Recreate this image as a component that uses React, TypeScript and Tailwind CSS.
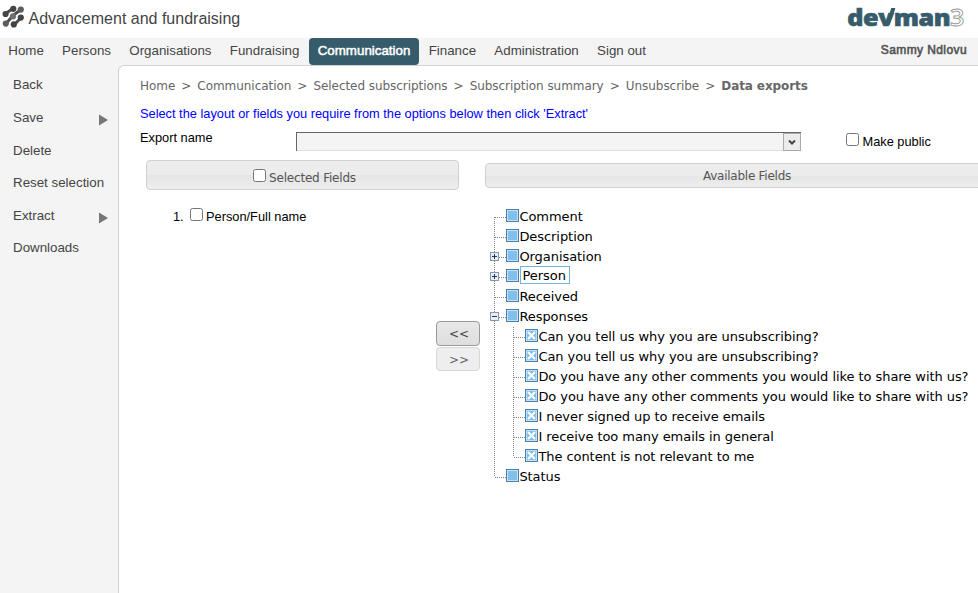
import type { ReactNode } from "react";

const navItems = ["Home", "Persons", "Organisations", "Fundraising", "Communication", "Finance", "Administration", "Sign out"];
const sideItems = [
  { label: "Back" },
  { label: "Save", arrow: true },
  { label: "Delete" },
  { label: "Reset selection" },
  { label: "Extract", arrow: true },
  { label: "Downloads" },
];
const crumbs = ["Home", "Communication", "Selected subscriptions", "Subscription summary", "Unsubscribe"];

type Node = { label: string; toggle?: "plus" | "minus"; selected?: boolean; child?: boolean; first?: boolean; last?: boolean };
const nodes: Node[] = [
  { label: "Comment", first: true },
  { label: "Description" },
  { label: "Organisation", toggle: "plus" },
  { label: "Person", toggle: "plus", selected: true },
  { label: "Received" },
  { label: "Responses", toggle: "minus" },
  { label: "Can you tell us why you are unsubscribing?", child: true },
  { label: "Can you tell us why you are unsubscribing?", child: true },
  { label: "Do you have any other comments you would like to share with us?", child: true },
  { label: "Do you have any other comments you would like to share with us?", child: true },
  { label: "I never signed up to receive emails", child: true },
  { label: "I receive too many emails in general", child: true },
  { label: "The content is not relevant to me", child: true, last: true },
  { label: "Status", last: true },
];

function Check({ className = "" }: { className?: string }) {
  return <input type="checkbox" className={`m-0 block size-[13px] shrink-0 appearance-none rounded-[2.5px] border border-[#767676] bg-white ${className}`} />;
}

function Connector({ node }: { node: Node }) {
  const width = node.child ? 35 : 16;
  const x = node.child ? 23.5 : 4.5;
  return (
    <svg width={width} height="20" className="block shrink-0" fill="none" shapeRendering="crispEdges">
      <g stroke="#808080" strokeDasharray="1 1">
        {node.child && <path d="M4.5 0V20" />}
        <path d={`M${x} ${node.first ? 10 : 0}V${node.last ? 10 : 20}`} />
        <path d={`M${x + 0.5} 10.5H${width}`} />
      </g>
      {node.toggle && (
        <g>
          <rect x="0.5" y="5.5" width="8" height="8" rx="1" fill="#e8edf4" stroke="#8496b2" />
          <path d={node.toggle === "plus" ? "M2 9.5H7M4.5 7V12" : "M2 9.5H7"} stroke="#24385c" />
        </g>
      )}
    </svg>
  );
}

function NodeBox({ crossed }: { crossed?: boolean }) {
  return (
    <svg width="13" height="13" className="mt-[2px] block shrink-0">
      <rect x="0.5" y="0.5" width="12" height="12" fill="#c3e2f6" stroke="#4a80b0" />
      <rect x="2" y="2" width="9" height="9" fill="#82c0ea" />
      {crossed && <path d="M3 3L10 10M10 3L3 10" stroke="#fff" strokeWidth="2" />}
    </svg>
  );
}

function TreeRow({ node }: { node: Node }) {
  return (
    <div className="flex h-5 items-start whitespace-nowrap">
      <Connector node={node} />
      <NodeBox crossed={node.child} />
      {node.selected ? (
        <span className="-mt-px ml-px h-[18px] w-[50px] border border-[#74b4dc] px-[1.5px] leading-[17px]">{node.label}</span>
      ) : (
        <span className="ml-[0.4px] leading-[19px]">{node.label}</span>
      )}
    </div>
  );
}

function Bar({ className, children }: { className: string; children: ReactNode }) {
  return (
    <div className={`flex shrink-0 items-center justify-center rounded-[4px] border border-[#d0d0d0] bg-[linear-gradient(#ededed_0%,#ececec_50%,#e5e5e5_52%,#eeeeee_100%)] font-['DejaVu_Sans',sans-serif] text-[12px] text-[#555] ${className}`}>
      {children}
    </div>
  );
}

function Mark() {
  return (
    <svg width="25" height="25" viewBox="0 0 25 25" className="block shrink-0" fill="#444" stroke="#4d4d4d">
      <path d="M4.7 9.5L12.3 4.3M4.7 20L12 11.5L20.3 5.3M13 21L20.7 13" strokeWidth="3" />
      <g stroke="none">
        <circle cx="12.3" cy="4.8" r="3.1" />
        <circle cx="19.8" cy="5.6" r="3.1" fill="#5c5c5c" />
        <circle cx="4.6" cy="10" r="3.1" />
        <circle cx="12" cy="12.3" r="3.1" fill="#707070" />
        <circle cx="19.8" cy="13.6" r="3.1" />
        <circle cx="4.8" cy="19.6" r="3.1" fill="#5c5c5c" />
        <circle cx="12.8" cy="20.4" r="3.1" />
      </g>
    </svg>
  );
}

export default function App() {
  return (
    <div className="flex h-[593px] w-[978px] flex-col overflow-hidden bg-white font-['Liberation_Sans',Arial,sans-serif] text-[13.33px] text-[#444]">
      <header className="flex h-[38px] shrink-0 items-start">
        <div className="pt-[4px] pl-px"><Mark /></div>
        <h1 className="mt-[9px] ml-[2.5px] text-[16px] leading-[20px] whitespace-nowrap">Advancement and fundraising</h1>
        <div className="mt-[2px] mr-[14px] ml-auto flex origin-right scale-x-[1.07] font-['Open_Sans',sans-serif] text-[23.5px] leading-[30px] font-extrabold tracking-[-0.4px] text-[#365c6b] [-webkit-text-stroke:0.7px_#365c6b]">
          <span>de</span>
          <span className="relative">
            v
            <svg width="10" height="18" className="absolute top-[6px] right-[-2px]"><path d="M1 17L6 0H10L4.5 17Z" fill="#365c6b" /></svg>
          </span>
          <span className="ml-[0.5px]">man</span>
          <span className="font-semibold text-white [-webkit-text-stroke:0.9px_#999]">3</span>
        </div>
      </header>

      <nav className="flex h-[27px] shrink-0 items-stretch bg-[#f4f4f4] pr-[11px] leading-[25px] whitespace-nowrap">
        <div className="-ml-[0.9px] flex">
          {navItems.map((item) => (
            <a key={item} className={item === "Communication" ? "rounded-[4px] bg-[#365c6b] px-[9.15px] text-white [-webkit-text-stroke:0.5px_white]" : "px-[9.15px]"}>{item}</a>
          ))}
        </div>
        <span className="ml-auto text-[12px] leading-[24px] tracking-[0.4px] text-[#555] [-webkit-text-stroke:0.6px_#555]">Sammy Ndlovu</span>
      </nav>

      <div className="flex min-h-0 flex-1 bg-[#f4f4f4]">
        <aside className="w-[118px] shrink-0 pt-[4.2px] pl-[13px]">
          {sideItems.map((item) => (
            <div key={item.label} className="flex h-[32.6px] items-center justify-between pr-[10px] whitespace-nowrap">
              <span>{item.label}</span>
              {item.arrow && <svg width="9" height="12" className="mt-[4px]"><path d="M0 0.5L9 6L0 11.5Z" fill="#777" /></svg>}
            </div>
          ))}
        </aside>

        <main className="flex min-w-0 flex-1 flex-col overflow-hidden rounded-tl-[6px] border-t border-l border-[#d3d3d3] bg-white text-[12.8px] text-black">
          <div className="mt-[12px] ml-[21px] flex h-[16px] shrink-0 font-['DejaVu_Sans',sans-serif] text-[12px] leading-[16px] tracking-[-0.05px] whitespace-nowrap text-[#666]">
            {crumbs.map((crumb) => (
              <span key={crumb} className="flex">{crumb}<span className="w-[22.1px] pl-[6px]">&gt;</span></span>
            ))}
            <b className="tracking-[-0.1px]">Data exports</b>
          </div>
          <p className="mt-[12px] ml-[21px] h-[16px] shrink-0 leading-[16px] whitespace-nowrap text-[#0000ff]">Select the layout or fields you require from the options below then click 'Extract'</p>

          <div className="ml-[21px] flex h-[34px] shrink-0 items-start pt-[8px]">
            <label className="w-[156px] leading-[15px]">Export name</label>
            <div className="mt-[2px] flex h-[19px] w-[505px] justify-end border-t border-l border-t-[#666] border-l-[#666] bg-[#f4f4f4] shadow-[inset_0_-1px_#ddd]">
              <div className="flex h-[18px] w-[18px] items-center justify-center border border-[#aaa] bg-[#ececec]">
                <svg width="8" height="7"><path d="M1 1.5L4 4.5L7 1.5" stroke="#444" strokeWidth="2" fill="none" /></svg>
              </div>
            </div>
            <Check className="mt-[3px] ml-[45px]" />
            <span className="mt-[4px] ml-[3.5px] leading-[15px]">Make public</span>
          </div>

          <div className="flex min-h-0 flex-1">
            <section className="ml-[27px] w-[313px] shrink-0">
              <Bar className="mt-[4px] h-[30px] w-[313px] tracking-[-0.2px]">
                <Check className="mr-[3px] ml-[4px]" />
                <span className="mt-[5px]">Selected Fields</span>
              </Bar>
              <ol className="mt-[18px] ml-[27px]">
                <li className="flex">
                  <span className="w-[17px] leading-[17px]">1.</span>
                  <Check />
                  <span className="ml-[3px] leading-[17px]">Person/Full name</span>
                </li>
              </ol>
            </section>
            <div className="mt-[165px] -ml-[23px] flex w-[44px] shrink-0 flex-col gap-px font-['DejaVu_Sans',sans-serif] text-[12px]">
              <button className="h-[25px] rounded-[4px] border border-[#999] bg-linear-to-b from-[#e8e8e8] to-[#dedede] pt-px pl-[2px] text-[#444]">&lt;&lt;</button>
              <button className="h-[24px] rounded-[4px] border border-[#d8d8d8] bg-[#eee] pt-px pl-[2px] text-[#666]">&gt;&gt;</button>
            </div>
            <section className="ml-[5px] w-[524px] shrink-0">
              <Bar className="mt-[7px] h-[25px] w-[524px] tracking-[-0.25px]">Available Fields</Bar>
              <div className="mt-[19px] ml-[5px] font-['DejaVu_Sans',sans-serif] text-[13px] tracking-[-0.06px]">
                {nodes.map((node, i) => <TreeRow key={i} node={node} />)}
              </div>
            </section>
          </div>
        </main>
      </div>
    </div>
  );
}
